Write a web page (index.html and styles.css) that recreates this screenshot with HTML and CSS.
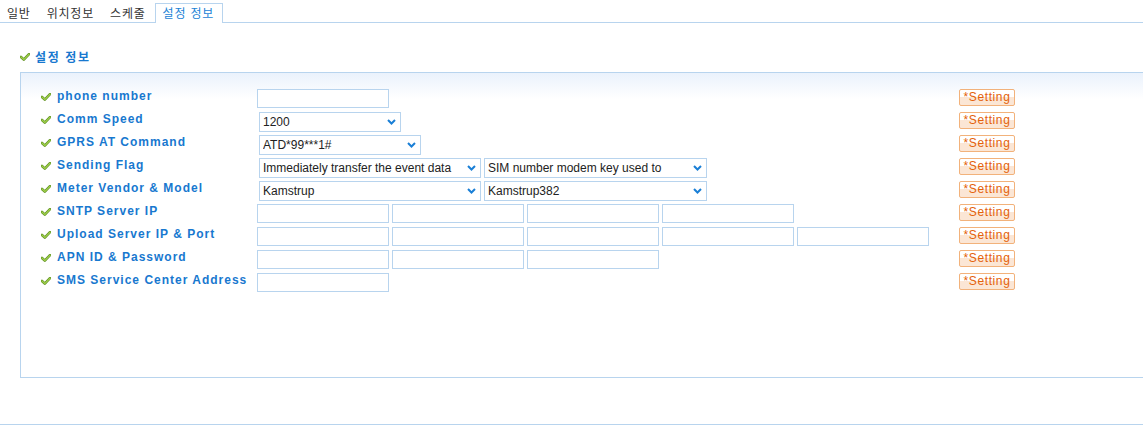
FILE: index.html
```html
<!DOCTYPE html>
<html lang="ko">
<head>
<meta charset="utf-8">
<title>설정 정보</title>
<link rel="stylesheet" href="styles.css">
</head>
<body>
<div class="tabs">
  <span class="tab">일반</span>
  <span class="tab">위치정보</span>
  <span class="tab">스케줄</span>
  <span class="tab active">설정 정보</span>
</div>

<h2 class="title"><svg class="chk" width="10" height="8" viewBox="0 0 10 8"><path d="M1 4 L3.8 6.6 L9 1.2" fill="none" stroke="#5f8f22" stroke-width="2.6" stroke-linecap="round" stroke-linejoin="round"/><path d="M1 4 L3.8 6.6 L9 1.2" fill="none" stroke="#9fd04a" stroke-width="1.3" stroke-linecap="round" stroke-linejoin="round"/></svg>설정 정보</h2>

<div class="box">
  <div class="row">
    <div class="label"><svg class="chk" width="10" height="8" viewBox="0 0 10 8"><path d="M1 4 L3.8 6.6 L9 1.2" fill="none" stroke="#5f8f22" stroke-width="2.6" stroke-linecap="round" stroke-linejoin="round"/><path d="M1 4 L3.8 6.6 L9 1.2" fill="none" stroke="#9fd04a" stroke-width="1.3" stroke-linecap="round" stroke-linejoin="round"/></svg>phone number</div>
    <div class="ctrls"><input class="ip" type="text"></div>
    <button class="btn">*Setting</button>
  </div>
  <div class="row">
    <div class="label"><svg class="chk" width="10" height="8" viewBox="0 0 10 8"><path d="M1 4 L3.8 6.6 L9 1.2" fill="none" stroke="#5f8f22" stroke-width="2.6" stroke-linecap="round" stroke-linejoin="round"/><path d="M1 4 L3.8 6.6 L9 1.2" fill="none" stroke="#9fd04a" stroke-width="1.3" stroke-linecap="round" stroke-linejoin="round"/></svg>Comm Speed</div>
    <div class="ctrls">
      <span class="sel w142"><select><option>1200</option></select><svg class="arr" width="9" height="6" viewBox="0 0 9 6"><path d="M1 1 L4.5 4.5 L8 1" fill="none" stroke="#1a7fd6" stroke-width="2"/></svg></span>
    </div>
    <button class="btn">*Setting</button>
  </div>
  <div class="row">
    <div class="label"><svg class="chk" width="10" height="8" viewBox="0 0 10 8"><path d="M1 4 L3.8 6.6 L9 1.2" fill="none" stroke="#5f8f22" stroke-width="2.6" stroke-linecap="round" stroke-linejoin="round"/><path d="M1 4 L3.8 6.6 L9 1.2" fill="none" stroke="#9fd04a" stroke-width="1.3" stroke-linecap="round" stroke-linejoin="round"/></svg>GPRS AT Command</div>
    <div class="ctrls">
      <span class="sel w162"><select><option>ATD*99***1#</option></select><svg class="arr" width="9" height="6" viewBox="0 0 9 6"><path d="M1 1 L4.5 4.5 L8 1" fill="none" stroke="#1a7fd6" stroke-width="2"/></svg></span>
    </div>
    <button class="btn">*Setting</button>
  </div>
  <div class="row">
    <div class="label"><svg class="chk" width="10" height="8" viewBox="0 0 10 8"><path d="M1 4 L3.8 6.6 L9 1.2" fill="none" stroke="#5f8f22" stroke-width="2.6" stroke-linecap="round" stroke-linejoin="round"/><path d="M1 4 L3.8 6.6 L9 1.2" fill="none" stroke="#9fd04a" stroke-width="1.3" stroke-linecap="round" stroke-linejoin="round"/></svg>Sending Flag</div>
    <div class="ctrls">
      <span class="sel w222"><select><option>Immediately transfer the event data</option></select><svg class="arr" width="9" height="6" viewBox="0 0 9 6"><path d="M1 1 L4.5 4.5 L8 1" fill="none" stroke="#1a7fd6" stroke-width="2"/></svg></span>
      <span class="sel w223"><select><option>SIM number modem key used to</option></select><svg class="arr" width="9" height="6" viewBox="0 0 9 6"><path d="M1 1 L4.5 4.5 L8 1" fill="none" stroke="#1a7fd6" stroke-width="2"/></svg></span>
    </div>
    <button class="btn">*Setting</button>
  </div>
  <div class="row">
    <div class="label"><svg class="chk" width="10" height="8" viewBox="0 0 10 8"><path d="M1 4 L3.8 6.6 L9 1.2" fill="none" stroke="#5f8f22" stroke-width="2.6" stroke-linecap="round" stroke-linejoin="round"/><path d="M1 4 L3.8 6.6 L9 1.2" fill="none" stroke="#9fd04a" stroke-width="1.3" stroke-linecap="round" stroke-linejoin="round"/></svg>Meter Vendor &amp; Model</div>
    <div class="ctrls">
      <span class="sel w222"><select><option>Kamstrup</option></select><svg class="arr" width="9" height="6" viewBox="0 0 9 6"><path d="M1 1 L4.5 4.5 L8 1" fill="none" stroke="#1a7fd6" stroke-width="2"/></svg></span>
      <span class="sel w223"><select><option>Kamstrup382</option></select><svg class="arr" width="9" height="6" viewBox="0 0 9 6"><path d="M1 1 L4.5 4.5 L8 1" fill="none" stroke="#1a7fd6" stroke-width="2"/></svg></span>
    </div>
    <button class="btn">*Setting</button>
  </div>
  <div class="row">
    <div class="label"><svg class="chk" width="10" height="8" viewBox="0 0 10 8"><path d="M1 4 L3.8 6.6 L9 1.2" fill="none" stroke="#5f8f22" stroke-width="2.6" stroke-linecap="round" stroke-linejoin="round"/><path d="M1 4 L3.8 6.6 L9 1.2" fill="none" stroke="#9fd04a" stroke-width="1.3" stroke-linecap="round" stroke-linejoin="round"/></svg>SNTP Server IP</div>
    <div class="ctrls"><input class="ip" type="text"><input class="ip" type="text"><input class="ip" type="text"><input class="ip" type="text"></div>
    <button class="btn">*Setting</button>
  </div>
  <div class="row">
    <div class="label"><svg class="chk" width="10" height="8" viewBox="0 0 10 8"><path d="M1 4 L3.8 6.6 L9 1.2" fill="none" stroke="#5f8f22" stroke-width="2.6" stroke-linecap="round" stroke-linejoin="round"/><path d="M1 4 L3.8 6.6 L9 1.2" fill="none" stroke="#9fd04a" stroke-width="1.3" stroke-linecap="round" stroke-linejoin="round"/></svg>Upload Server IP &amp; Port</div>
    <div class="ctrls"><input class="ip" type="text"><input class="ip" type="text"><input class="ip" type="text"><input class="ip" type="text"><input class="ip" type="text"></div>
    <button class="btn">*Setting</button>
  </div>
  <div class="row">
    <div class="label"><svg class="chk" width="10" height="8" viewBox="0 0 10 8"><path d="M1 4 L3.8 6.6 L9 1.2" fill="none" stroke="#5f8f22" stroke-width="2.6" stroke-linecap="round" stroke-linejoin="round"/><path d="M1 4 L3.8 6.6 L9 1.2" fill="none" stroke="#9fd04a" stroke-width="1.3" stroke-linecap="round" stroke-linejoin="round"/></svg>APN ID &amp; Password</div>
    <div class="ctrls"><input class="ip" type="text"><input class="ip" type="text"><input class="ip" type="text"></div>
    <button class="btn">*Setting</button>
  </div>
  <div class="row">
    <div class="label"><svg class="chk" width="10" height="8" viewBox="0 0 10 8"><path d="M1 4 L3.8 6.6 L9 1.2" fill="none" stroke="#5f8f22" stroke-width="2.6" stroke-linecap="round" stroke-linejoin="round"/><path d="M1 4 L3.8 6.6 L9 1.2" fill="none" stroke="#9fd04a" stroke-width="1.3" stroke-linecap="round" stroke-linejoin="round"/></svg>SMS Service Center Address</div>
    <div class="ctrls"><input class="ip" type="text"></div>
    <button class="btn">*Setting</button>
  </div>
</div>

<div class="bottom-line"></div>
</body>
</html>
```

FILE: styles.css
```css
* { box-sizing: border-box; }

body {
  margin: 0;
  background: #fff;
  font-family: "Liberation Sans", "Noto Sans CJK KR", sans-serif;
  font-size: 12px;
  color: #222;
}

.tabs {
  display: flex;
  align-items: flex-end;
  height: 23px;
  border-bottom: 1px solid #b8d4ee;
  padding-left: 0;
  gap: 1px;
}

.tab {
  height: 19px;
  line-height: 18px;
  padding: 0 7px 0 6px;
  border: 1px solid transparent;
  border-bottom: none;
  font-family: "Noto Sans CJK KR", sans-serif;
  font-size: 12px;
  letter-spacing: 0.8px;
  color: #333;
}

.tab.active {
  height: 20px;
  margin-bottom: -1px;
  background: #fff;
  border-color: #b8d4ee;
  color: #1c83d6;
  padding: 0 8px 0 7px;
}

.title {
  display: flex;
  align-items: center;
  gap: 5px;
  margin: 26px 0 0 0;
  padding-left: 20px;
  height: 16px;
  line-height: 16px;
  font-family: "Noto Sans CJK KR", sans-serif;
  font-size: 12px;
  font-weight: bold;
  letter-spacing: 1.6px;
  color: #1878cf;
}

.chk { flex: none; display: block; }

.box {
  margin: 7px 0 0 20px;
  height: 306px;
  border: 1px solid #b8d4ee;
  border-right: none;
  background: linear-gradient(#eaf2fc, #ffffff 26px);
  padding: 15px 0 0 20px;
}

.row {
  display: grid;
  grid-template-columns: 216px 702px 56px;
  height: 23px;
}

.label {
  display: flex;
  align-items: center;
  gap: 6px;
  height: 16px;
  font-weight: bold;
  font-size: 12px;
  letter-spacing: 1px;
  color: #1878cf;
  white-space: nowrap;
}

.label .chk { margin-top: 1px; }

.ctrls {
  display: flex;
  gap: 3px;
  padding-top: 1px;
  align-items: flex-start;
}

.ip {
  width: 132px;
  height: 19px;
  border: 1px solid #b8d4ee;
  background: #fff;
  margin: 0;
  padding: 0 3px;
  font: 12px "Liberation Sans", sans-serif;
  outline: none;
}

.sel {
  position: relative;
  display: block;
  height: 20px;
}
.ctrls .sel:first-child { margin-left: 2px; }

.sel select {
  appearance: none;
  -webkit-appearance: none;
  width: 100%;
  height: 20px;
  border: 1px solid #b8d4ee;
  border-radius: 0;
  background: #fff;
  margin: 0;
  padding: 0 16px 0 3px;
  font: 12px "Liberation Sans", sans-serif;
  color: #222;
  outline: none;
}

.sel .arr {
  position: absolute;
  right: 5px;
  top: 7px;
  pointer-events: none;
}

.w142 { width: 142px; }
.w162 { width: 162px; }
.w222 { width: 222px; }
.w223 { width: 223px; }

.btn {
  margin-top: 1px;
  width: 56px;
  height: 17px;
  padding: 0;
  border: 1px solid #f2b27b;
  border-radius: 2px;
  background: linear-gradient(#ffffff 0, #ffffff 48%, #fbe6d5 48%, #fbe6d5 100%);
  color: #e4620a;
  font: 12px/15px "Liberation Sans", sans-serif;
  letter-spacing: 0.6px;
  text-align: center;
  cursor: pointer;
}

.bottom-line {
  margin-top: 46px;
  height: 1px;
  background: #b8d4ee;
}
```
